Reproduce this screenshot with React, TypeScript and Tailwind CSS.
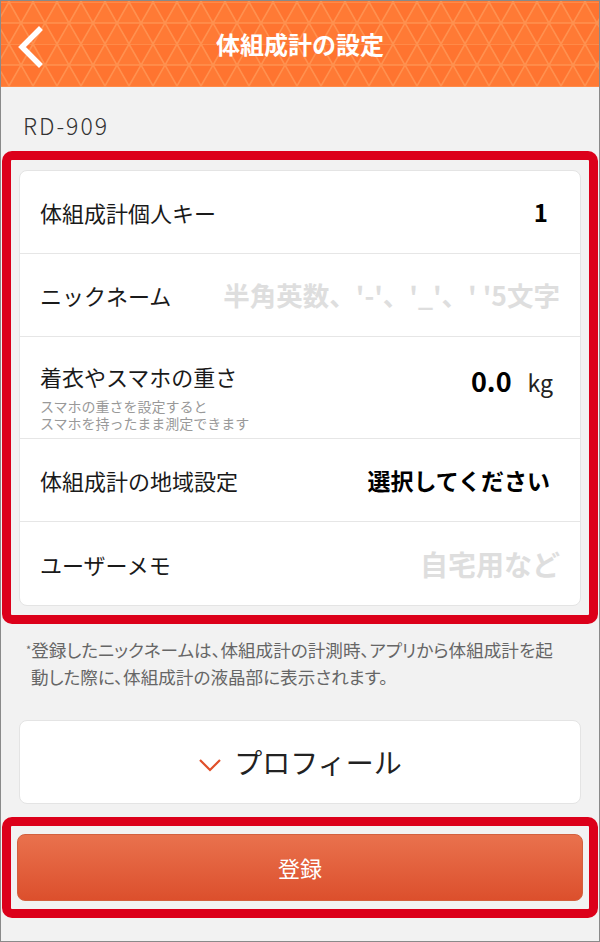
import React from 'react';

const font = { fontFamily: '"Noto Sans CJK JP", "Noto Sans", sans-serif' };

function HeaderPattern() {
  return (
    <svg className="absolute inset-0 h-full w-full" xmlns="http://www.w3.org/2000/svg">
      <defs>
        <pattern id="tri" width="24" height="42" patternUnits="userSpaceOnUse" x="-4" y="1">
          <path d="M0 21 L12 0 L24 21 Z" fill="#ff8440" fillOpacity="0.35" />
          <path d="M12 42 L24 21 L36 42 Z M-12 42 L0 21 L12 42 Z" fill="#ff8440" fillOpacity="0.35" />
          <path d="M0 21 L12 0 L24 21 M-12 42 L0 21 L12 42 L24 21 L36 42 M0 0 H24 M0 21 H24" stroke="#ff914f" strokeWidth="1.6" fill="none" />
        </pattern>
      </defs>
      <rect width="100%" height="100%" fill="url(#tri)" />
    </svg>
  );
}

function Row({ label, children, sub }: { label: string; children?: React.ReactNode; sub?: React.ReactNode }) {
  return (
    <div
      className={`flex justify-between px-[20px] border-b border-[#e6e6e6] last:border-b-0 ${
        sub ? 'h-[102px] items-start pt-[24px]' : 'h-[83px] items-center'
      }`}
    >
      <div className="flex flex-col">
        <span className="text-[22px] leading-[30px] text-[#1a1a1a]">{label}</span>
        {sub && <p className="mt-[7px] text-[14px] leading-[17px] text-[#999]">{sub}</p>}
      </div>
      <div className="flex items-center">{children}</div>
    </div>
  );
}

export default function App() {
  return (
    <div className="w-[600px] h-[942px] bg-[#f2f2f2] border border-[#8a8a8a] overflow-hidden" style={font}>
      <header className="relative h-[86px] bg-[#ff7430] flex items-center justify-center">
        <HeaderPattern />
        <svg className="absolute left-[14px] top-[25px]" width="28" height="42" viewBox="0 0 28 42">
          <path d="M24 4 L7 21 L24 38" stroke="#fff" strokeWidth="5.5" fill="none" strokeLinecap="square" />
        </svg>
        <h1 className="relative text-[24px] font-bold text-white">体組成計の設定</h1>
      </header>

      <div className="h-[64px] pt-[25px] pl-[22px] text-[23px] leading-[26px] tracking-[2px] text-[#333] font-light">RD-909</div>

      <div className="mx-[1px] border-[9px] border-[#dc001a] rounded-[10px] pt-[10px] pb-[9px] px-[8px]">
        <div className="bg-white rounded-[8px] border border-[#e4e4e4]">
          <Row label="体組成計個人キー">
            <span className="text-[24px] font-bold text-black pr-[12px]">1</span>
          </Row>
          <Row label="ニックネーム">
            <span className="text-[26.5px] font-bold text-[#dedede]">半角英数、'-'、'_'、' '5文字</span>
          </Row>
          <Row
            label="着衣やスマホの重さ"
            sub={
              <>
                スマホの重さを設定すると
                <br />
                スマホを持ったまま測定できます
              </>
            }
          >
            <div className="flex items-baseline">
              <span className="text-[27px] font-bold text-black">0.0</span>
              <span className="ml-[16px] pr-[7px] text-[23px] text-[#222]">kg</span>
            </div>
          </Row>
          <Row label="体組成計の地域設定">
            <span className="text-[23px] font-bold text-black pr-[10px]">選択してください</span>
          </Row>
          <Row label="ユーザーメモ">
            <span className="text-[28px] font-bold text-[#dedede]">自宅用など</span>
          </Row>
        </div>
      </div>

      <p className="pt-[12px] pl-[30px] pr-[30px] -indent-[5px] text-[17.6px] leading-[27px] text-[#666] [font-feature-settings:'palt']">
        <span className="text-[11px] align-top">*</span>登録したニックネームは、体組成計の計測時、アプリから体組成計を起動した際に、体組成計の液晶部に表示されます。
      </p>

      <div className="mt-[30px] mx-[18px] h-[84px] bg-white rounded-[8px] border border-[#e4e4e4] flex items-center justify-center">
        <svg width="24" height="14" viewBox="0 0 24 14" className="mr-[12px] mt-[6px]">
          <path d="M2 2 L12 12 L22 2" stroke="#e0502a" strokeWidth="2.2" fill="none" />
        </svg>
        <span className="text-[28px] text-[#222]">プロフィール</span>
      </div>

      <div className="mt-[13px] mx-[1px] border-[9px] border-[#dc001a] rounded-[10px] pt-[8px] pb-[8px] px-[6px]">
        <button className="w-full h-[67px] rounded-[8px] border border-[#d2603f] bg-gradient-to-b from-[#e9714d] to-[#dc4f2c] text-white text-[22px]">
          登録
        </button>
      </div>
    </div>
  );
}
